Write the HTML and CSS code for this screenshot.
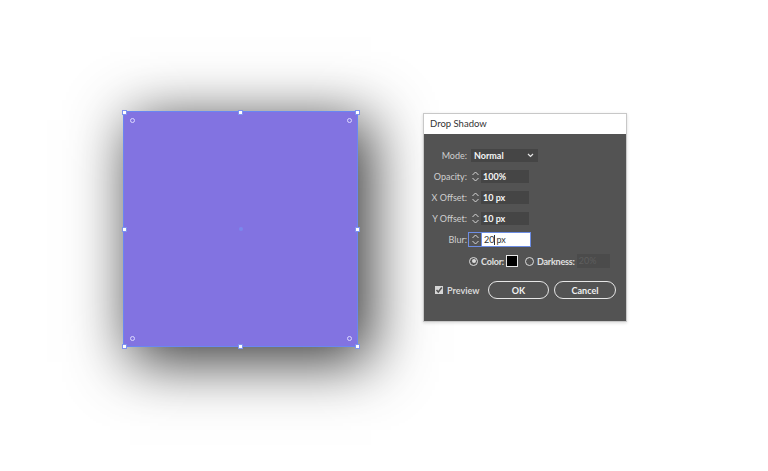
FILE: index.html
```html
<!DOCTYPE html>
<html>
<head>
<meta charset="utf-8">
<link rel="stylesheet" href="styles.css">
</head>
<body>
<div class="canvas">
  <div class="art">
    <div class="handle h-tl"></div>
    <div class="handle h-tc"></div>
    <div class="handle h-tr"></div>
    <div class="handle h-ml"></div>
    <div class="handle h-mr"></div>
    <div class="handle h-bl"></div>
    <div class="handle h-bc"></div>
    <div class="handle h-br"></div>
    <div class="widget w-tl"></div>
    <div class="widget w-tr"></div>
    <div class="widget w-bl"></div>
    <div class="widget w-br"></div>
    <div class="center-pt"></div>
  </div>

  <div class="dialog">
    <div class="titlebar">Drop Shadow</div>
    <div class="body">
      <div class="row">
        <span class="label">Mode:</span>
        <div class="select"><span>Normal</span>
          <svg class="chev" width="7" height="5" viewBox="0 0 7 5"><path d="M1 1 L3.5 3.5 L6 1" fill="none" stroke="#e6e6e6" stroke-width="1.2"/></svg>
        </div>
      </div>
      <div class="row">
        <span class="label">Opacity:</span>
        <span class="spin"><svg width="9" height="13" viewBox="0 0 9 13"><path d="M1.5 5 L4.5 2 L7.5 5 M1.5 8 L4.5 11 L7.5 8" fill="none" stroke="#d8d8d8" stroke-width="1"/></svg></span>
        <div class="field">100%</div>
      </div>
      <div class="row">
        <span class="label">X Offset:</span>
        <span class="spin"><svg width="9" height="13" viewBox="0 0 9 13"><path d="M1.5 5 L4.5 2 L7.5 5 M1.5 8 L4.5 11 L7.5 8" fill="none" stroke="#d8d8d8" stroke-width="1"/></svg></span>
        <div class="field">10 px</div>
      </div>
      <div class="row">
        <span class="label">Y Offset:</span>
        <span class="spin"><svg width="9" height="13" viewBox="0 0 9 13"><path d="M1.5 5 L4.5 2 L7.5 5 M1.5 8 L4.5 11 L7.5 8" fill="none" stroke="#d8d8d8" stroke-width="1"/></svg></span>
        <div class="field">10 px</div>
      </div>
      <div class="row">
        <span class="label">Blur:</span>
        <span class="spin focus"><svg width="9" height="13" viewBox="0 0 9 13"><path d="M1.5 5 L4.5 2 L7.5 5 M1.5 8 L4.5 11 L7.5 8" fill="none" stroke="#d8d8d8" stroke-width="1"/></svg></span>
        <div class="field active">20<span class="caret"></span> px</div>
      </div>
      <div class="row color-row">
        <span class="radio on"></span>
        <span class="rlabel">Color:</span>
        <span class="swatch"></span>
        <span class="radio"></span>
        <span class="rlabel">Darkness:</span>
        <div class="field disabled">20%</div>
      </div>
      <div class="row bottom-row">
        <span class="check"><svg width="8" height="8" viewBox="0 0 8 8"><path d="M1.5 4 L3.3 6 L6.8 1.5" fill="none" stroke="#535353" stroke-width="1.5"/></svg></span>
        <span class="plabel">Preview</span>
        <button class="btn ok">OK</button>
        <button class="btn cancel">Cancel</button>
      </div>
    </div>
  </div>
</div>
</body>
</html>
```

FILE: styles.css
```css
html, body {
  margin: 0;
  padding: 0;
  background: #ffffff;
}
.canvas {
  position: relative;
  width: 768px;
  height: 471px;
  overflow: hidden;
  background: #ffffff;
  font-family: Lato, "Open Sans", sans-serif;
}
.art {
  position: absolute;
  left: 124px;
  top: 112px;
  width: 233px;
  height: 234px;
  background: #8273e1;
  outline: 1px solid #6a86f2;
  box-shadow: 10px 12px 56px 4px rgba(0, 0, 0, 0.78);
}
.handle {
  position: absolute;
  width: 3px;
  height: 3px;
  background: #ffffff;
  border: 1px solid #7f93ee;
  margin: -2.5px 0 0 -2.5px;
}
.h-tl { left: 0; top: 0; }
.h-tc { left: 50%; top: 0; }
.h-tr { left: 100%; top: 0; }
.h-ml { left: 0; top: 50%; }
.h-mr { left: 100%; top: 50%; }
.h-bl { left: 0; top: 100%; }
.h-bc { left: 50%; top: 100%; }
.h-br { left: 100%; top: 100%; }
.widget {
  position: absolute;
  width: 3px;
  height: 3px;
  border: 1px solid #dcd8ff;
  border-radius: 50%;
  margin: -2.5px 0 0 -2.5px;
}
.w-tl { left: 8px; top: 8px; }
.w-tr { left: 225px; top: 8px; }
.w-bl { left: 8px; top: 226px; }
.w-br { left: 225px; top: 226px; }
.center-pt {
  position: absolute;
  left: 115px;
  top: 115px;
  width: 4px;
  height: 4px;
  border-radius: 50%;
  background: #7a88ec;
}

.dialog {
  position: absolute;
  left: 423px;
  top: 113px;
  width: 202px;
  height: 207px;
  border: 1px solid #c8c8c8;
  background: #535353;
  box-shadow: 0 1px 3px rgba(0,0,0,0.15);
  color: #d6d6d6;
  font-size: 9px;
}
.titlebar {
  height: 20px;
  background: #ffffff;
  color: #333;
  font-size: 9.5px;
  line-height: 20px;
  padding-left: 6px;
}
.body {
  padding-top: 15px;
}
.row {
  display: flex;
  align-items: center;
  height: 13px;
  margin-bottom: 8px;
}
.label {
  width: 43px;
  text-align: right;
  color: #cfcfcf;
  margin-right: 3px;
}
.select {
  width: 67px;
  height: 13px;
  background: #454545;
  display: flex;
  align-items: center;
  justify-content: space-between;
  padding: 0 4px 0 3px;
  margin-left: 1px;
  box-sizing: border-box;
  color: #f4f4f4;
  font-weight: 700;
}
.spin {
  width: 11px;
  height: 13px;
  display: flex;
  align-items: center;
  justify-content: center;
  box-sizing: border-box;
}
.spin.focus {
  outline: 1px solid #6d8de4;
  width: 12px;
  margin-left: -1px;
  margin-right: 1px;
}
.field {
  width: 48px;
  height: 13px;
  line-height: 13px;
  background: #454545;
  color: #f4f4f4;
  padding-left: 2px;
  box-sizing: border-box;
  font-weight: 700;
}
.field.active {
  background: #ffffff;
  color: #333333;
  outline: 1px solid #6d8de4;
  display: flex;
  align-items: center;
  font-weight: 400;
}
.caret {
  display: inline-block;
  width: 1px;
  height: 10px;
  background: #333;
  margin: 0 1px 0 0;
}
.color-row {
  margin-top: 4px;
  padding-left: 45px;
  height: 14px;
}
.radio {
  width: 7px;
  height: 7px;
  border: 1px solid #dcdcdc;
  border-radius: 50%;
  box-sizing: content-box;
  position: relative;
}
.radio.on::after {
  content: "";
  position: absolute;
  left: 1.5px;
  top: 1.5px;
  width: 4px;
  height: 4px;
  border-radius: 50%;
  background: #dcdcdc;
}
.rlabel {
  margin-left: 3px;
  color: #e0e0e0;
  font-weight: 700;
  letter-spacing: -0.2px;
}
.swatch {
  width: 10px;
  height: 10px;
  background: #000;
  border: 1px solid #e8e8e8;
  margin: 0 7px 0 2px;
}
.field.disabled {
  width: 33px;
  height: 14px;
  margin-left: 2px;
  background: #4b4b4b;
  color: #5e5e5e;
  font-weight: 400;
}
.bottom-row {
  margin-top: 13px;
  padding-left: 11px;
  height: 18px;
}
.check {
  width: 8px;
  height: 8px;
  background: #d6d6d6;
  display: flex;
  align-items: center;
  justify-content: center;
}
.plabel {
  margin-left: 4px;
  color: #d8d8d8;
  width: 41px;
  font-weight: 700;
}
.btn {
  height: 18px;
  border: 1.5px solid #e6e6e6;
  border-radius: 9px;
  background: #535353;
  color: #f0f0f0;
  font-family: Lato, "Open Sans", sans-serif;
  font-weight: 700;
  font-size: 9px;
  padding: 0;
  box-sizing: border-box;
}
.ok {
  width: 61px;
  margin-left: 0;
}
.cancel {
  width: 62px;
  margin-left: 5px;
}
```
